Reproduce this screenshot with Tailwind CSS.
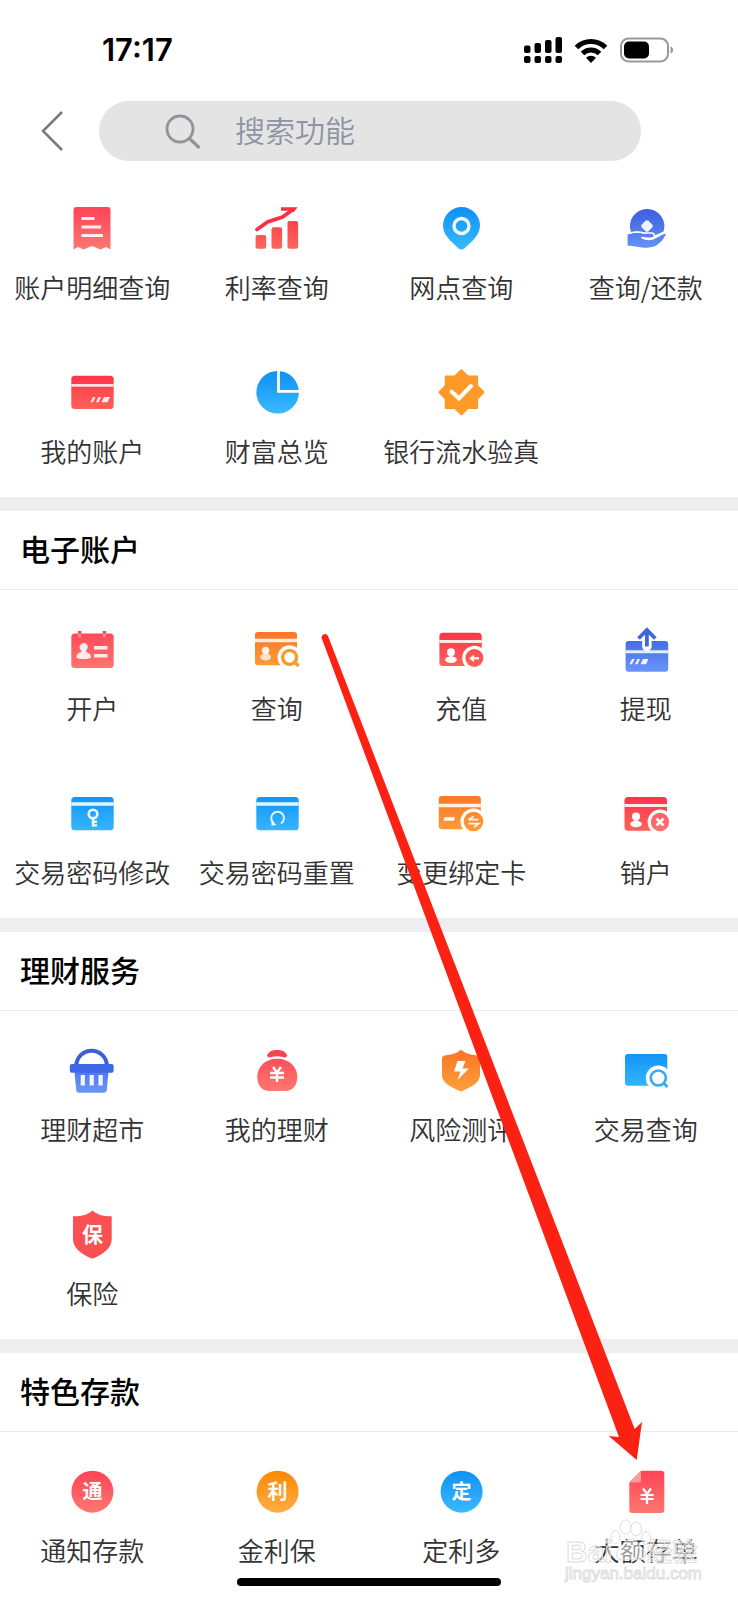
<!DOCTYPE html>
<html lang="zh-CN">
<head>
<meta charset="utf-8">
<meta name="viewport" content="width=device-width, initial-scale=1">
<title>搜索功能</title>
<script src="https://cdn.jsdelivr.net/npm/@tailwindcss/browser@4"></script>
</head>
<body class="bg-white">
<svg class="absolute size-0" aria-hidden="true">
  <defs>
    <linearGradient id="red" x1="0" y1="0" x2="0" y2="48" gradientUnits="userSpaceOnUse"><stop offset=".1" stop-color="#ff3048"/><stop offset="1" stop-color="#ff6b5a"/></linearGradient>
    <linearGradient id="pink" x1="0" y1="0" x2="0" y2="48" gradientUnits="userSpaceOnUse"><stop offset=".1" stop-color="#ff4557"/><stop offset="1" stop-color="#ff7a72"/></linearGradient>
    <linearGradient id="blue" x1="0" y1="0" x2="0" y2="48" gradientUnits="userSpaceOnUse"><stop offset=".1" stop-color="#0f92f5"/><stop offset="1" stop-color="#3cbcff"/></linearGradient>
    <linearGradient id="indigo" x1="0" y1="0" x2="0" y2="48" gradientUnits="userSpaceOnUse"><stop offset=".1" stop-color="#3a5fdc"/><stop offset="1" stop-color="#6a97fb"/></linearGradient>
    <linearGradient id="orange" x1="0" y1="0" x2="0" y2="48" gradientUnits="userSpaceOnUse"><stop offset=".1" stop-color="#fb7429"/><stop offset="1" stop-color="#fda33a"/></linearGradient>
    <linearGradient id="amber" x1="0" y1="0" x2="0" y2="48" gradientUnits="userSpaceOnUse"><stop offset=".1" stop-color="#fb8a05"/><stop offset="1" stop-color="#ffaf48"/></linearGradient>
  </defs>
</svg>

<div class="relative min-h-screen overflow-hidden font-['Noto_Sans_CJK_SC',sans-serif] text-[#333]">

  <header class="pb-2">
    <div class="flex h-[101px] items-start justify-between pt-8 pr-16 pl-[102px]">
      <time class="font-['Inter','Noto_Sans_CJK_SC',sans-serif] text-[31px] leading-9 font-semibold text-black">17:17</time>
      <div class="flex h-9 items-center gap-3">
        <svg class="h-[26px] w-[38px]" viewBox="0 0 38 26" role="img" aria-label="信号">
          <g fill="#000"><rect x="0" y="8.500" width="6.500" height="7.500" rx="2"/><rect x="10.500" y="6" width="6.500" height="10" rx="2"/><rect x="21" y="3" width="6.500" height="13" rx="2"/><rect x="31.500" y="0" width="6.500" height="16" rx="2"/><rect x="0" y="19" width="6.500" height="7" rx="2"/><rect x="10.500" y="19" width="6.500" height="7" rx="2"/><rect x="21" y="19" width="6.500" height="7" rx="2"/><rect x="31.500" y="19" width="6.500" height="7" rx="2"/></g>
        </svg>
        <svg class="h-[25px] w-[34px]" viewBox="0 0 34 25" role="img" aria-label="无线网络">
          <path d="M2.500 9.500a20.500 20.500 0 0 1 29 0M8.500 15.500a12 12 0 0 1 17 0" fill="none" stroke="#000" stroke-width="5"/>
          <path d="M17 25l-5-5.300a7.200 7.200 0 0 1 10 0z" fill="#000"/>
        </svg>
        <svg class="h-[26px] w-[54px]" viewBox="0 0 54 26" role="img" aria-label="电池">
          <rect x="1" y="1.500" width="47" height="23" rx="7.500" fill="none" stroke="#999" stroke-width="2"/>
          <rect x="4" y="4.500" width="25" height="17" rx="5" fill="#000"/>
          <path d="M50.500 9.500c3.500 1 3.500 6 0 7z" fill="#999"/>
        </svg>
      </div>
    </div>
    <div class="flex h-15 items-center pr-[97px]">
      <button type="button" aria-label="返回" class="flex w-[99px] shrink-0 justify-center pl-[5px]">
        <svg class="h-[42px] w-6" viewBox="0 0 24 42"><path d="M22 2L3 21l19 19" fill="none" stroke="#7a7a7a" stroke-width="2.500"/></svg>
      </button>
      <label class="flex h-15 grow items-center gap-[34px] rounded-full bg-[#e4e4e4] pl-[66px]">
        <svg class="size-9 shrink-0" viewBox="0 0 36 36" aria-hidden="true"><circle cx="15" cy="16" r="13" fill="none" stroke="#909399" stroke-width="2.800"/><path d="M24.500 25.500L33.500 34" stroke="#909399" stroke-width="3.200" stroke-linecap="round"/></svg>
        <input type="text" aria-label="搜索功能" placeholder="搜索功能" class="h-15 w-full min-w-0 bg-transparent pb-1 text-[30px] leading-9 font-[350] outline-none placeholder:text-[#8f94a3]">
      </label>
    </div>
  </header>

  <main>
    <section aria-label="查询">
      <div class="grid grid-cols-4 text-center text-[26px] leading-9 font-[350]">
        <a href="#" class="flex h-41 flex-col items-center gap-[17px] pt-[35px] whitespace-nowrap">
          <svg class="size-12" viewBox="0 0 48 48"><path d="M8.500 3h31a3 3 0 0 1 3 3v39.500l-4.500-2.500-5.500 2.500-8.500-3.500-8.500 3.500-5.500-2.500-4.500 2.500V6a3 3 0 0 1 3-3z" fill="url(#pink)"/><path d="M13.500 14.500h13M13.500 23h19.500M13.500 31.500h21.500" stroke="#fff" stroke-opacity=".9" stroke-width="3.200"/></svg>
          <span>账户明细查询</span></a>
        <a href="#" class="flex h-41 flex-col items-center gap-[17px] pt-[35px] whitespace-nowrap">
          <svg class="size-12" viewBox="0 0 48 48"><g fill="url(#red)"><rect x="2.600" y="31" width="10.600" height="13.700" rx="2"/><rect x="18.500" y="23.300" width="10.600" height="21.400" rx="2"/><rect x="34.500" y="17" width="10.600" height="27.700" rx="2"/></g><path d="M4 25.500L14.500 18l15-5L40 5.500" fill="none" stroke="#fd3048" stroke-width="3.800" stroke-linecap="round"/><path d="M28 3.200h16.600l-4 5-3-1.500H28z" fill="#fd3048"/></svg>
          <span>利率查询</span></a>
        <a href="#" class="flex h-41 flex-col items-center gap-[17px] pt-[35px] whitespace-nowrap">
          <svg class="size-12" viewBox="0 0 48 48"><path d="M24.500 3A18.500 18.500 0 0 0 6 21.500c0 10 9 16.500 15 22.500q3.500 3 7 0c6-6 15-12.500 15-22.500A18.500 18.500 0 0 0 24.500 3z" fill="url(#blue)"/><circle cx="24.500" cy="22" r="7.500" fill="none" stroke="#fff" stroke-opacity=".92" stroke-width="3.400"/></svg>
          <span>网点查询</span></a>
        <a href="#" class="flex h-41 flex-col items-center gap-[17px] pt-[35px] whitespace-nowrap">
          <svg class="size-12" viewBox="0 0 48 48"><path d="M9 28a17.200 17.200 0 1 1 32.500-.5l-9 4-17-4z" fill="url(#indigo)"/><path d="M23.500 16.800q1.500-1.300 3 0l3.700 3.700q1.300 1.500 0 3l-3.700 3.700q-1.500 1.300-3 0l-3.700-3.700q-1.300-1.500 0-3z" fill="#fff" fill-opacity=".92"/><path d="M5.600 30.500c6-2.500 12-2 17-.5h7c3 .5 4 3 1.500 4.500 6 0 7.500-5 12.900-4.500-3 6-8 13.700-19 13.700-8 0-12-2-19.400-2z" fill="url(#indigo)"/><path d="M5.600 29.500c6-2 12-2 17-.5h7.400c3.500 1 3 4.500 0 5q-5 .8-10.500-.5c5 2.500 10 2.500 14 0s6-4.500 10-4.500" fill="none" stroke="#fff" stroke-width="1.500"/></svg>
          <span>查询/还款</span></a>
        <a href="#" class="flex h-41 flex-col items-center gap-[17px] pt-[35px] whitespace-nowrap">
          <svg class="size-12" viewBox="0 0 48 48"><rect x="3.300" y="7.700" width="42.400" height="33.300" rx="3.500" fill="url(#red)"/><path d="M3.300 17.300h42.400" stroke="#ffe3e3" stroke-width="2.700"/><path d="M22.500 34.300l2.500-5.300h2.500L25 34.300zM28 34.300l2.500-5.300H33l-2.500 5.300zM33.500 34.300L36 29h6l-2.500 5.300z" fill="#fff" fill-opacity=".9"/></svg>
          <span>我的账户</span></a>
        <a href="#" class="flex h-41 flex-col items-center gap-[17px] pt-[35px] whitespace-nowrap">
          <svg class="size-12" viewBox="0 0 48 48"><circle cx="24.600" cy="24.300" r="21.300" fill="url(#blue)"/><path d="M25.500 2v21.300H47" fill="none" stroke="#fff" stroke-width="2.800"/></svg>
          <span>财富总览</span></a>
        <a href="#" class="flex h-41 flex-col items-center gap-[17px] pt-[35px] whitespace-nowrap">
          <svg class="size-12" viewBox="0 0 48 48"><g fill="#fd9a28"><rect x="7.700" y="7.600" width="33.400" height="33.400" rx="1"/><rect x="7.700" y="7.600" width="33.400" height="33.400" rx="1.500" transform="rotate(45 24.400 24.300)"/></g><path d="M14.500 23.500l7.500 7 12-12.500" fill="none" stroke="#fff" stroke-width="4" stroke-linecap="round"/></svg>
          <span>银行流水验真</span></a>
      </div>
    </section>

    <section class="border-t-14 border-[#eeeef1]">
      <h2 class="h-[79px] border-b border-[#ebebed] pt-[19px] pl-5 text-[30px] leading-9 font-medium text-black">电子账户</h2>
      <div class="grid grid-cols-4 text-center text-[26px] leading-9 font-[350]">
        <a href="#" class="flex h-41 flex-col items-center gap-[17px] pt-[35px] whitespace-nowrap">
          <svg class="size-12" viewBox="0 0 48 48"><path d="M11.700 6v7M36.500 6v7" stroke="#fb4557" stroke-width="3.400"/><rect x="3.300" y="8.500" width="42.400" height="34.500" rx="3.500" fill="url(#pink)"/><path d="M11.700 8.500v4M36.500 8.500v4" stroke="#ff8c8c" stroke-width="3"/><path d="M15.700 18a4.200 4.200 0 0 1 2.500 7.500v1.500c3 1 4.800 2.500 4.800 5.500-3 2-11.500 2-14.600 0 0-3 1.800-4.500 4.800-5.500v-1.500a4.200 4.200 0 0 1 2.500-7.500z" fill="#fff" fill-opacity=".88"/><path d="M26 22.800h13.500M26 30.700h13.500" stroke="#fff" stroke-opacity=".88" stroke-width="3.600"/></svg>
          <span>开户</span></a>
        <a href="#" class="flex h-41 flex-col items-center gap-[17px] pt-[35px] whitespace-nowrap">
          <svg class="size-12" viewBox="0 0 48 48"><rect x="2" y="7" width="42" height="33.300" rx="3" fill="url(#orange)"/><path d="M2 15.500h42" stroke="#ffecd9" stroke-width="3.600"/><circle cx="12.600" cy="25.500" r="3.700" fill="#fff" fill-opacity=".9"/><ellipse cx="12.600" cy="32" rx="5.400" ry="3.600" fill="#fff" fill-opacity=".75"/><circle cx="36.600" cy="32.300" r="12" fill="#fff"/><circle cx="36.600" cy="32.300" r="7" fill="none" stroke="#f99a2c" stroke-width="3.300"/><path d="M41.500 37l4 4" stroke="#f99a2c" stroke-width="3.300"/></svg>
          <span>查询</span></a>
        <a href="#" class="flex h-41 flex-col items-center gap-[17px] pt-[35px] whitespace-nowrap">
          <svg class="size-12" viewBox="0 0 48 48"><rect x="2.400" y="7.700" width="42.300" height="33.300" rx="3.500" fill="url(#red)"/><path d="M2.400 16.500h42.300" stroke="#ffe9e9" stroke-width="3.200"/><circle cx="14" cy="27.200" r="4" fill="#fff"/><rect x="12.500" y="29" width="3" height="4" fill="#fff"/><ellipse cx="14" cy="34.700" rx="5.800" ry="3.300" fill="#fff"/><circle cx="37.400" cy="33" r="12.200" fill="#fff"/><circle cx="37.400" cy="33" r="9" fill="url(#red)"/><path d="M32 33.500l5-4v2.500h5v2.500h-5V37z" fill="#fff" fill-opacity=".9"/></svg>
          <span>充值</span></a>
        <a href="#" class="flex h-41 flex-col items-center gap-[17px] pt-[35px] whitespace-nowrap">
          <svg class="size-12" viewBox="0 0 48 48"><rect x="3.600" y="16" width="42.600" height="30.700" rx="3" fill="url(#indigo)"/><path d="M3.600 26.700h42.600" stroke="#e5ecff" stroke-width="3"/><path d="M24.900 12v9.500" stroke="#fff" stroke-width="9.500" stroke-linecap="round"/><path d="M24.900 5v16.500M16.500 13.500l8.400-8.600 8.400 8.600" fill="none" stroke="#3f66dd" stroke-width="3.800"/><path d="M7.500 39.300l2.500-5.300h2.500L10 39.300zM13 39.300l2.500-5.300H18l-2.500 5.300zM18.500 39.300L21 34h5.500L24 39.300z" fill="#fff" fill-opacity=".9"/></svg>
          <span>提现</span></a>
        <a href="#" class="flex h-41 flex-col items-center gap-[17px] pt-[35px] whitespace-nowrap">
          <svg class="size-12" viewBox="0 0 48 48"><rect x="3.300" y="8" width="42.400" height="33.300" rx="3.500" fill="url(#blue)"/><path d="M3.300 15h42.400" stroke="#e2f4ff" stroke-width="3.400"/><circle cx="25" cy="25" r="4.300" fill="none" stroke="#fff" stroke-opacity=".92" stroke-width="2.600"/><path d="M25 29.500v8.200M25 32.700h4M25 36.400h4" stroke="#fff" stroke-opacity=".92" stroke-width="2.400"/></svg>
          <span>交易密码修改</span></a>
        <a href="#" class="flex h-41 flex-col items-center gap-[17px] pt-[35px] whitespace-nowrap">
          <svg class="size-12" viewBox="0 0 48 48"><rect x="3.300" y="8" width="42.400" height="33.300" rx="3.500" fill="url(#blue)"/><path d="M3.300 15h42.400" stroke="#e2f4ff" stroke-width="3.400"/><path d="M20.500 34a6.400 6.400 0 1 1 7.500.5" fill="none" stroke="#fff" stroke-opacity=".88" stroke-width="2"/><path d="M18.500 36.500v-5l5 4.500z" fill="#fff"/></svg>
          <span>交易密码重置</span></a>
        <a href="#" class="flex h-41 flex-col items-center gap-[17px] pt-[35px] whitespace-nowrap">
          <svg class="size-12" viewBox="0 0 48 48"><rect x="1.800" y="7" width="42" height="33.300" rx="3" fill="url(#orange)"/><path d="M1.800 16.500h42" stroke="#fff0df" stroke-width="3.600"/><path d="M7.500 28.300H18l-1 3.400H6.500z" fill="#fff"/><circle cx="36.500" cy="32.500" r="13" fill="#fff"/><circle cx="36.500" cy="32.500" r="9.800" fill="url(#orange)"/><path d="M31.500 30.700h10M36.500 27.500l-5 3.200M31.500 34.700h10l-4.500 3.500" fill="none" stroke="#fff" stroke-opacity=".9" stroke-width="1.800"/></svg>
          <span>变更绑定卡</span></a>
        <a href="#" class="flex h-41 flex-col items-center gap-[17px] pt-[35px] whitespace-nowrap">
          <svg class="size-12" viewBox="0 0 48 48"><rect x="2.500" y="8" width="42.500" height="33.700" rx="3.500" fill="url(#red)"/><path d="M2.500 16.500H45" stroke="#ffe9ec" stroke-width="3.200"/><circle cx="14" cy="27.500" r="4" fill="#fff"/><rect x="12.500" y="29" width="3" height="4" fill="#fff"/><ellipse cx="14" cy="35" rx="5.800" ry="3.300" fill="#fff"/><circle cx="38" cy="33" r="12.400" fill="#fff"/><circle cx="38" cy="33" r="9.200" fill="url(#pink)"/><path d="M34.500 29.500l7 7M41.500 29.500l-7 7" stroke="#fff" stroke-width="2.600"/></svg>
          <span>销户</span></a>
      </div>
    </section>

    <section class="border-t-14 border-[#eeeef1]">
      <h2 class="h-[79px] border-b border-[#ebebed] pt-[19px] pl-5 text-[30px] leading-9 font-medium text-black">理财服务</h2>
      <div class="grid grid-cols-4 text-center text-[26px] leading-9 font-[350]">
        <a href="#" class="flex h-41 flex-col items-center gap-[17px] pt-[35px] whitespace-nowrap">
          <svg class="size-12" viewBox="0 0 48 48"><path d="M8.300 20a15.300 15.300 0 0 1 30.600 0" fill="none" stroke="#3a5fdc" stroke-width="4"/><path d="M6.400 25h34.200l-1.800 19a3 3 0 0 1-3 2.700H11.200a3 3 0 0 1-3-2.700z" fill="url(#indigo)"/><rect x="1.800" y="18" width="43.800" height="8.700" rx="2" fill="#3f68e6"/><path d="M14.800 29v10.500M23.700 29v10.500M32.600 29v10.500" stroke="#fff" stroke-opacity=".92" stroke-width="4.200"/></svg>
          <span>理财超市</span></a>
        <a href="#" class="flex h-41 flex-col items-center gap-[17px] pt-[35px] whitespace-nowrap">
          <svg class="size-12" viewBox="0 0 48 48"><path d="M14 9.500C16 5 20 4 24 4s8.500 1 10.300 5.500c-1 2.500-3.300 2-4.300 1.500q-6-1.500-11.500 0c-2 .5-4 .5-4.500-1.500z" fill="#f94350"/><path d="M24.300 12.700c12 0 20 8 20 18 0 9-5 14.300-12 14.300H16.300c-7 0-12-5.300-12-14.300 0-10 8-18 20-18z" fill="url(#pink)"/><path d="M20 21l4 5.500 4-5.500M17 27h14M17 31.500h14M24 26.500V36" fill="none" stroke="#fff" stroke-width="2.400"/></svg>
          <span>我的理财</span></a>
        <a href="#" class="flex h-41 flex-col items-center gap-[17px] pt-[35px] whitespace-nowrap">
          <svg class="size-12" viewBox="0 0 48 48"><path d="M24 3.700c4.500 4 10 5 16.500 5.700q2.500.3 2.500 3V29c0 8-9 12-17 15.800q-2 1-4 0C14 41 5 37 5 29V12.400q0-2.700 2.500-3C14 8.700 19.500 7.700 24 3.700z" fill="url(#orange)"/><path d="M20.500 15h8l-3 7.500h6.500L20.500 34l3-8.500H17z" fill="#fff"/></svg>
          <span>风险测评</span></a>
        <a href="#" class="flex h-41 flex-col items-center gap-[17px] pt-[35px] whitespace-nowrap">
          <svg class="size-12" viewBox="0 0 48 48"><rect x="3" y="8" width="42.300" height="31.700" rx="3" fill="url(#blue)"/><circle cx="36.300" cy="32" r="12.500" fill="#fff"/><circle cx="36.300" cy="32" r="7.500" fill="none" stroke="#36a9f3" stroke-width="2.600"/><path d="M41.500 37l4 4" stroke="#36a9f3" stroke-width="2.800"/></svg>
          <span>交易查询</span></a>
        <a href="#" class="flex h-41 flex-col items-center gap-[17px] pt-[35px] whitespace-nowrap">
          <svg class="size-12 overflow-visible" viewBox="0 0 48 48"><path d="M24.400.5C29 4.500 34 6.300 43.700 6.300V29c0 9-8 15-19.300 19.800C13 44 5 38 5 29V6.300C15 6.300 20 4.500 24.400.5z" fill="#fb5051"/><text x="24.400" y="31.500" font-size="21" font-weight="700" text-anchor="middle" fill="#fff">保</text></svg>
          <span>保险</span></a>
      </div>
    </section>

    <section class="border-t-14 border-[#eeeef1]">
      <h2 class="h-[79px] border-b border-[#ebebed] pt-[19px] pl-5 text-[30px] leading-9 font-medium text-black">特色存款</h2>
      <div class="grid grid-cols-4 text-center text-[26px] leading-9 font-[350]">
        <a href="#" class="flex h-41 flex-col items-center gap-[17px] pt-[35px] whitespace-nowrap">
          <svg class="size-12" viewBox="0 0 48 48"><circle cx="24.400" cy="24.700" r="21" fill="url(#pink)"/><text x="24.400" y="32" font-size="20" font-weight="700" text-anchor="middle" fill="#fff">通</text></svg>
          <span>通知存款</span></a>
        <a href="#" class="flex h-41 flex-col items-center gap-[17px] pt-[35px] whitespace-nowrap">
          <svg class="size-12" viewBox="0 0 48 48"><circle cx="24.600" cy="24.700" r="21" fill="url(#amber)"/><text x="24.600" y="32" font-size="20" font-weight="700" text-anchor="middle" fill="#fff">利</text></svg>
          <span>金利保</span></a>
        <a href="#" class="flex h-41 flex-col items-center gap-[17px] pt-[35px] whitespace-nowrap">
          <svg class="size-12" viewBox="0 0 48 48"><circle cx="24.600" cy="24.700" r="21" fill="url(#blue)"/><text x="24.600" y="32" font-size="20" font-weight="700" text-anchor="middle" fill="#fff">定</text></svg>
          <span>定利多</span></a>
        <a href="#" class="flex h-41 flex-col items-center gap-[17px] pt-[35px] whitespace-nowrap">
          <svg class="size-12" viewBox="0 0 48 48"><path d="M19 3.700h20.300a3 3 0 0 1 3 3V43a3 3 0 0 1-3 3h-29a3 3 0 0 1-3-3V15.500z" fill="url(#pink)"/><path d="M19 3.700V13a2.500 2.500 0 0 1-2.500 2.500H7.300z" fill="#ff9c9c"/><path d="M21 21.500l4 5.500 4-5.500M18.500 28h13M18.500 32h13M25 27v10" fill="none" stroke="#fff" stroke-width="2.200"/></svg>
          <span>大额存单</span></a>
      </div>
    </section>
  </main>

  <div class="absolute bottom-[14px] left-1/2 h-2 w-[264px] -translate-x-1/2 rounded-full bg-black"></div>

  <!-- Watermark over the last item -->
  <svg class="absolute right-9 bottom-1 h-[78px] w-[138px] overflow-visible" viewBox="0 0 138 78" role="img" aria-label="百度经验">
    <g fill="#fff" fill-opacity=".5" stroke="#dedede" stroke-width="1">
      <ellipse cx="61.500" cy="9" rx="5.500" ry="7"/><ellipse cx="72" cy="11" rx="5.500" ry="7"/><ellipse cx="51.500" cy="19" rx="4.500" ry="6.500"/><ellipse cx="82" cy="20" rx="4.500" ry="6.500"/>
      <path d="M67 21c-6 0-7 5-11 9s-6 11 2 12c4 .5 6-1 9-1s5 1.500 9 1c8-1 6-8 2-12s-5-9-11-9z"/>
      <text x="2" y="44" font-family="Liberation Sans, sans-serif" font-size="30" font-weight="700">Bai</text>
      <text x="83" y="43" font-family="Noto Sans CJK SC, sans-serif" font-size="25" font-weight="700">经验</text>
      <text x="1" y="61" font-family="Liberation Sans, sans-serif" font-size="17">jingyan.baidu.com</text>
    </g>
  </svg>

  <!-- Arrow that points from 查询 to 大额存单 -->
  <svg class="pointer-events-none absolute top-[630px] left-[43%] h-[835px] w-[330px]" viewBox="317 630 330 835" aria-hidden="true">
    <path d="M322 639a3.200 3.200 0 0 1 6-3L634.700 1429l7.300-7-5.300 38-28-24 10.300 1z" fill="#fc2213"/>
  </svg>
</div>
</body>
</html>
